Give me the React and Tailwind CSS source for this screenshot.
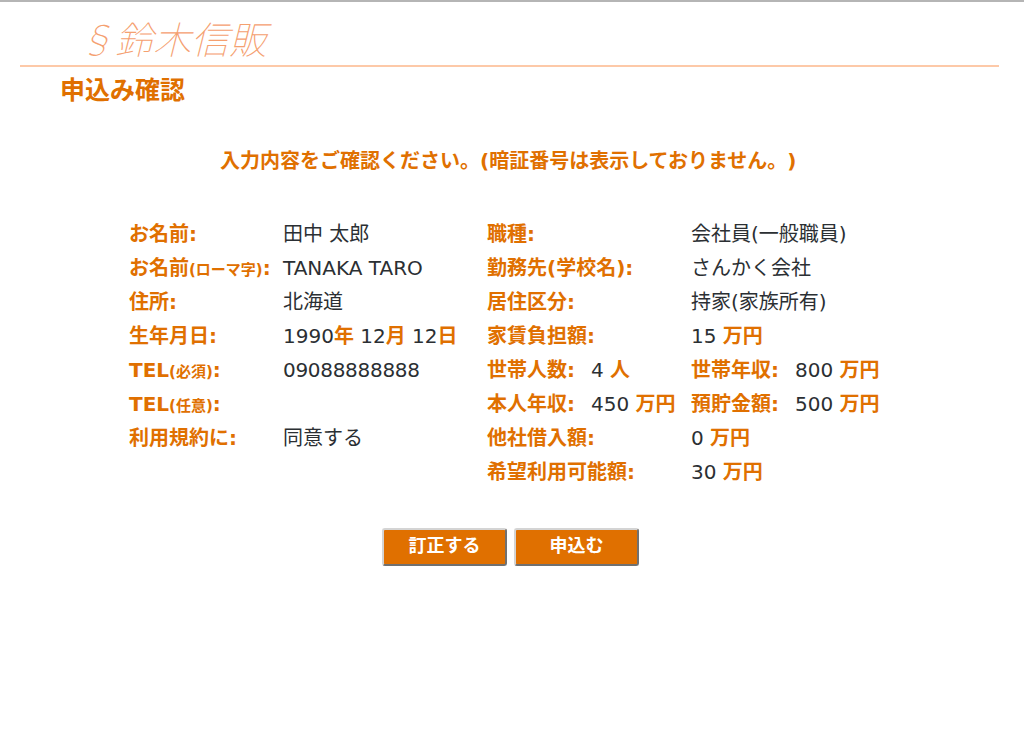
const stack = { fontFamily: '"DejaVu Sans", "Noto Sans CJK JP", sans-serif' };

const Lbl = ({ children, className = "" }) => (
  <span className={"font-bold text-[#e07000] " + className}>{children}</span>
);

const Val = ({ children }) => <span className="font-normal text-[#2b2f33]">{children}</span>;

const Man = () => <Lbl>万円</Lbl>;

const Small = ({ children }) => <span className="text-[15px]">{children}</span>;

const leftRows = [
  [<>お名前:</>, <Val>田中 太郎</Val>],
  [<>お名前<Small>(ローマ字)</Small>:</>, <Val>TANAKA TARO</Val>],
  [<>住所:</>, <Val>北海道</Val>],
  [<>生年月日:</>, <><Val>1990</Val><Lbl>年</Lbl> <Val>12</Val><Lbl>月</Lbl> <Val>12</Val><Lbl>日</Lbl></>],
  [<>TEL<Small>(必須)</Small>:</>, <span className="tracking-[-0.3px]"><Val>09088888888</Val></span>],
  [<>TEL<Small>(任意)</Small>:</>, null],
  [<>利用規約に:</>, <Val>同意する</Val>],
];

const Row = ({ children }) => <div className="flex h-[34px] items-center whitespace-nowrap">{children}</div>;

const btn = "w-[125px] h-[38px] bg-[#e07000] text-white font-bold text-[18px] leading-none pb-[2px] rounded-[3px] border-2 border-t-[#d4d4d4] border-l-[#d4d4d4] border-r-[#707070] border-b-[#707070]";

export default function App() {
  return (
    <div className="min-h-[751px] bg-white border-t-2 border-[#b5b5b5] text-[20px]" style={stack}>
      <div className="h-[65px] border-b-2 border-[#fdc9a8] ml-5 mr-[25px] pl-[57px] pt-[12px]">
        <span className="text-[38px] leading-[48px] font-thin italic text-[#f5a070] font-['Noto_Sans_CJK_JP',sans-serif] whitespace-nowrap">§鈴木信販</span>
      </div>
      <h1 className="ml-[60px] mt-[8px] text-[25px] leading-[32px] font-bold text-[#e07000]">申込み確認</h1>
      <p className="mt-[39px] ml-[220px] text-[20px] leading-[30px] font-bold text-[#e07000] whitespace-nowrap [text-spacing-trim:space-all]">入力内容をご確認ください。(暗証番号は表示しておりません。)</p>
      <div className="flex mt-[41px] ml-[129px]">
        <div className="w-[358px]">
          {leftRows.map((r, i) => (
            <Row key={i}>
              <Lbl className="w-[154px]">{r[0]}</Lbl>
              <span>{r[1]}</span>
            </Row>
          ))}
        </div>
        <div>
          <Row><Lbl className="w-[204px]">職種:</Lbl><Val>会社員(一般職員)</Val></Row>
          <Row><Lbl className="w-[204px]">勤務先(学校名):</Lbl><Val>さんかく会社</Val></Row>
          <Row><Lbl className="w-[204px]">居住区分:</Lbl><Val>持家(家族所有)</Val></Row>
          <Row><Lbl className="w-[204px]">家賃負担額:</Lbl><span><Val>15</Val> <Man /></span></Row>
          <Row>
            <Lbl className="w-[104px]">世帯人数:</Lbl>
            <span className="w-[100px]"><Val>4</Val> <Lbl>人</Lbl></span>
            <Lbl className="w-[104px]">世帯年収:</Lbl>
            <span><Val>800</Val> <Man /></span>
          </Row>
          <Row>
            <Lbl className="w-[104px]">本人年収:</Lbl>
            <span className="w-[100px]"><Val>450</Val> <Man /></span>
            <Lbl className="w-[104px]">預貯金額:</Lbl>
            <span><Val>500</Val> <Man /></span>
          </Row>
          <Row><Lbl className="w-[204px]">他社借入額:</Lbl><span><Val>0</Val> <Man /></span></Row>
          <Row><Lbl className="w-[204px]">希望利用可能額:</Lbl><span><Val>30</Val> <Man /></span></Row>
        </div>
      </div>
      <div className="flex gap-[7px] mt-[39px] ml-[382px]">
        <button className={btn}>訂正する</button>
        <button className={btn}>申込む</button>
      </div>
    </div>
  );
}
